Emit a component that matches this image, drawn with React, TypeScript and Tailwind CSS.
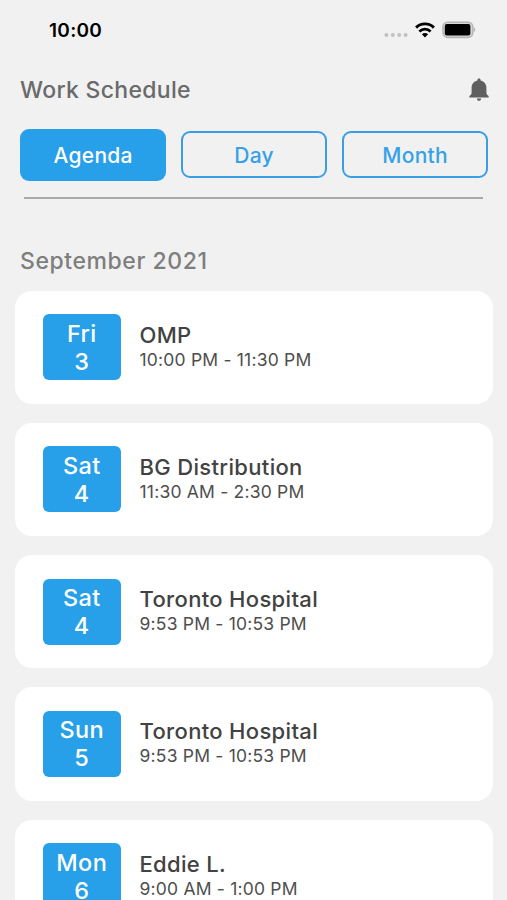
import { useState } from 'react'

interface Shift {
  day: string
  date: number
  title: string
  time: string
}

const TABS = ['Agenda', 'Day', 'Month']

const SHIFTS: Shift[] = [
  { day: 'Fri', date: 3, title: 'OMP', time: '10:00 PM - 11:30 PM' },
  { day: 'Sat', date: 4, title: 'BG Distribution', time: '11:30 AM - 2:30 PM' },
  { day: 'Sat', date: 4, title: 'Toronto Hospital', time: '9:53 PM - 10:53 PM' },
  { day: 'Sun', date: 5, title: 'Toronto Hospital', time: '9:53 PM - 10:53 PM' },
  { day: 'Mon', date: 6, title: 'Eddie L.', time: '9:00 AM - 1:00 PM' },
]

function StatusBar() {
  return (
    <div className="flex h-[60px] shrink-0 items-center justify-between pl-[49px] pr-[31.5px]">
      <span className="pt-px text-[19px] font-semibold leading-6 tracking-[0.3px] text-black">10:00</span>
      <div className="flex items-center">
        {/* no signal */}
        <svg width="24" height="6" viewBox="0 0 24 6" className="mt-2.5" fill="#c2c2c2">
          <circle cx="2.4" cy="3" r="2" />
          <circle cx="8.8" cy="3" r="2" />
          <circle cx="15.2" cy="3" r="2" />
          <circle cx="21.6" cy="3" r="2" />
        </svg>
        <svg width="20" height="16" viewBox="0 0 20 16" className="ml-[7px]" fill="none" stroke="#000">
          <path d="M1.1 5.6a12.6 12.6 0 0 1 17.8 0" strokeWidth="2.9" />
          <path d="M4.4 9.5a7.9 7.9 0 0 1 11.2 0" strokeWidth="2.8" />
          <path d="M10 15.5 6.9 12.3a4.4 4.4 0 0 1 6.2 0z" fill="#000" stroke="none" />
        </svg>
        <svg width="34" height="18" viewBox="0 0 34 18" className="ml-[7px]">
          <rect x="1" y="1.2" width="29.8" height="15.2" rx="4.8" fill="#d9d9d9" stroke="#b5b5b5" strokeWidth="1.6" />
          <rect x="2.8" y="3.1" width="25.6" height="11.4" rx="2" fill="#000" />
          <path d="M31.8 6.6c1 .4 1.5 1.2 1.5 2.2s-.5 1.8-1.5 2.2z" fill="#b5b5b5" />
        </svg>
      </div>
    </div>
  )
}

function BellIcon() {
  return (
    <svg width="20" height="24" viewBox="0 0 20 24" fill="#5f5f5f">
      <path d="M10 .4c1 0 1.6.7 1.6 1.7v.5c3.6.8 5.8 3.7 5.8 7.4v4.5c0 1.4.6 2.3 1.6 3 .5.4.7.8.7 1.3v.6H.3v-.6c0-.5.2-.9.7-1.300 1-.7 1.600-1.600 1.600-3V10c0-3.700 2.200-6.600 5.800-7.400v-.5C8.400 1.100 9 .4 10 .4z" />
      <path d="M7.900 20.400h4.200c0 1.500-.9 2.400-2.100 2.400s-2.100-.9-2.100-2.400z" />
    </svg>
  )
}

function ShiftCard({ shift }: { shift: Shift }) {
  return (
    <div className="flex h-[113.3px] shrink-0 items-start rounded-[17px] bg-white pl-7 pt-[23.5px]">
      <div className="flex h-[66px] w-[77.5px] flex-col items-center rounded-[6px] bg-[#279fe9] pt-[5.5px] text-[23.5px] font-medium leading-7 tracking-[0.4px] text-white">
        <span>{shift.day}</span>
        <span>{shift.date}</span>
      </div>
      <div className="ml-[19px] flex flex-col pt-[6.5px]">
        <span className="text-[22px] font-medium leading-7 tracking-[0.33px] text-[#424242]">{shift.title}</span>
        <span className="text-[17.5px] leading-[22.6px] tracking-[0.2px] text-[#4e4e4e]">{shift.time}</span>
      </div>
    </div>
  )
}

export default function App() {
  const [active, setActive] = useState('Agenda')

  return (
    <div className="flex h-[900px] w-[507px] flex-col overflow-hidden bg-[#f1f1f1] font-['Inter',sans-serif]">
      <StatusBar />

      <header className="flex h-[60px] shrink-0 items-center justify-between pl-5 pr-[18.5px]">
        <h1 className="text-[23px] font-medium leading-7 tracking-[0.3px] text-[#6a6a6a]">Work Schedule</h1>
        <BellIcon />
      </header>

      <div className="mt-2 flex h-[53px] shrink-0 items-center gap-[14.7px] pl-5">
        {TABS.map((tab) => (
          <button
            key={tab}
            onClick={() => setActive(tab)}
            className={
              tab === active
                ? 'h-[52px] w-[146.3px] rounded-[9px] bg-[#279fe9] pt-0.5 text-[21px] font-medium tracking-[0.3px] text-white'
                : 'h-[47px] w-[146.3px] rounded-[9px] border-2 border-[#389fe5] pt-0.5 text-[21px] font-medium tracking-[0.3px] text-[#35a1e7]'
            }
          >
            {tab}
          </button>
        ))}
      </div>

      <div className="mx-6 mt-4 h-[2px] shrink-0 bg-[#a9a9a9]" />

      <h2 className="mt-[48px] shrink-0 pl-5 text-[23px] font-medium leading-7 tracking-[0.57px] text-[#7e7e7e]">
        September 2021
      </h2>

      <div className="mt-[15.5px] flex flex-col gap-[19px] pl-[15px] pr-[14px]">
        {SHIFTS.map((shift, i) => (
          <ShiftCard key={i} shift={shift} />
        ))}
      </div>
    </div>
  )
}
